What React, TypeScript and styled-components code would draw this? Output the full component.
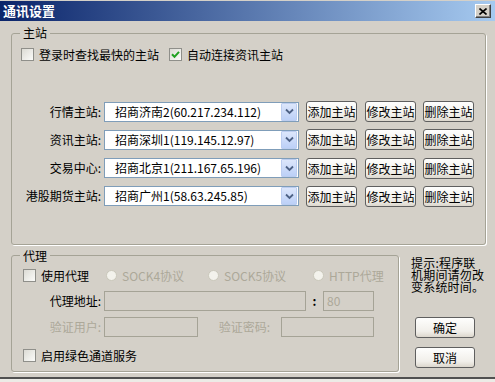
import React from "react";
import styled, { createGlobalStyle } from "styled-components";

const face = "#d4d0c8";
const grayText = "#aca899";
const font = `"Noto Sans CJK SC", "Liberation Sans", sans-serif`;

const GlobalStyle = createGlobalStyle`
  html, body {
    margin: 0;
    padding: 0;
    background: ${face};
  }
  body {
    font-family: ${font};
    font-size: 12px;
    color: #000;
  }
  * { box-sizing: border-box; }
`;

const Window = styled.div`
  width: 495px;
  height: 382px;
  display: flex;
  flex-direction: column;
  overflow: hidden;
  background: ${face};
`;

const Frame = styled.div`
  flex: 1;
  display: flex;
  flex-direction: column;
  border-bottom: 2px solid #505050;
`;

const Backdrop = styled.div`
  height: 3px;
  background: #ecebe6;
`;

const TitleBar = styled.div`
  height: 20px;
  margin-top: 1px;
  display: flex;
  align-items: center;
  justify-content: space-between;
  padding: 0 4px 0 3px;
  background: linear-gradient(90deg, #0a246a 0%, #a6caf0 100%);
`;

const Title = styled.span`
  color: #fff;
  font-weight: bold;
  font-size: 13px;
  line-height: 20px;
`;

const CloseButton = styled.button`
  width: 16px;
  height: 14px;
  padding: 0;
  display: flex;
  align-items: center;
  justify-content: center;
  background: ${face};
  border: 1px solid;
  border-color: #fff #404040 #404040 #fff;
  box-shadow: inset -1px -1px #808080;
`;

const Body = styled.div`
  flex: 1;
  display: flex;
  flex-direction: column;
  padding: 6px 9px 0 11px;
`;

const Group = styled.fieldset<{ width?: number; pb: number }>`
  margin: 0;
  padding: 0 0 ${p => p.pb}px;
  min-width: 0;
  ${p => p.width && `width: ${p.width}px;`}
  border: 1px solid #a5a396;
  border-radius: 3px;
  box-shadow: 1px 1px 0 #fff;
`;

const Legend = styled.legend`
  margin-left: 8px;
  padding: 0 3px;
  font-size: 12px;
  line-height: 12px;
`;

const CheckLine = styled.div<{ mt: number; pl: number }>`
  display: flex;
  align-items: center;
  height: 13px;
  margin-top: ${p => p.mt}px;
  padding-left: ${p => p.pl}px;
`;

const CheckItem = styled.label<{ width?: number; gray?: boolean }>`
  display: flex;
  align-items: center;
  gap: 5px;
  line-height: 13px;
  color: ${p => (p.gray ? grayText : "#000")};
  ${p => p.width && `width: ${p.width}px;`}
`;

const Box = styled.span`
  width: 13px;
  height: 13px;
  display: flex;
  align-items: center;
  justify-content: center;
  border: 1px solid #8f8f8a;
  background: linear-gradient(135deg, #dcdbd4, #fbfbf9);
`;

const Radio = styled.span`
  width: 11px;
  height: 11px;
  border-radius: 50%;
  border: 1px solid #cac8bb;
  background: #f3f2ec;
`;

const ServerList = styled.div`
  display: flex;
  flex-direction: column;
  gap: 7.33px;
  margin-top: 40px;
`;

const ServerRow = styled.div`
  display: flex;
  align-items: center;
  height: 21px;
`;

const RowLabel = styled.span<{ width: number; mr?: number; gray?: boolean }>`
  width: ${p => p.width}px;
  margin-right: ${p => p.mr ?? 3}px;
  text-align: right;
  white-space: nowrap;
  line-height: 20px;
  color: ${p => (p.gray ? grayText : "#000")};
`;

const Combo = styled.div`
  width: 195px;
  height: 20px;
  display: flex;
  align-items: center;
  justify-content: space-between;
  padding: 0 1px 0 10px;
  background: #fff;
  border: 1px solid #7f9db9;
  line-height: 18px;
  white-space: nowrap;
`;

const ComboArrow = styled.span`
  width: 16px;
  height: 18px;
  display: flex;
  align-items: center;
  justify-content: center;
  border: 1px solid #bccdf0;
  border-radius: 1px;
  background: linear-gradient(#dce6fb, #bcd0f7);
`;

const PushButton = styled.button<{ width: number; ml?: number }>`
  width: ${p => p.width}px;
  height: 21px;
  margin-left: ${p => p.ml ?? 0}px;
  padding: 0;
  font-family: ${font};
  font-size: 12px;
  line-height: 19px;
  color: #000;
  border: 1px solid #5f5f5f;
  border-radius: 3px;
  background: linear-gradient(#fefefd, #f1efea 70%, #dcd7cd);
`;

const BottomArea = styled.div`
  display: flex;
  margin-top: 5px;
`;

const ProxyRows = styled.div`
  display: flex;
  flex-direction: column;
  padding: 4px 0 0 11px;
`;

const FieldRow = styled.div<{ mt: number }>`
  display: flex;
  align-items: center;
  height: 20px;
  margin-top: ${p => p.mt}px;
`;

const Field = styled.div<{ width: number }>`
  width: ${p => p.width}px;
  height: 20px;
  padding-left: 3px;
  border: 1px solid #a5a396;
  background: ${face};
  color: ${grayText};
  line-height: 18px;
`;

const PortColon = styled.span`
  width: 17px;
  text-align: center;
  font-weight: bold;
`;

const Side = styled.div`
  display: flex;
  flex-direction: column;
  padding: 7px 0 0 12px;
`;

const Hint = styled.div`
  white-space: pre-line;
  line-height: 12px;
  letter-spacing: 0.2px;
`;

const SideButtons = styled.div`
  display: flex;
  flex-direction: column;
  gap: 9px;
  margin: 24px 0 0 4px;
`;

const servers = [
  { label: "行情主站:", value: "招商济南2(60.217.234.112)" },
  { label: "资讯主站:", value: "招商深圳1(119.145.12.97)" },
  { label: "交易中心:", value: "招商北京1(211.167.65.196)" },
  { label: "港股期货主站:", value: "招商广州1(58.63.245.85)" },
];

const Check = ({ checked }: { checked?: boolean }) => (
  <Box>
    {checked && (
      <svg width="9" height="9" viewBox="0 0 9 9">
        <path d="M1 4.2 L3.5 6.8 L8 1.8" fill="none" stroke="#21a121" strokeWidth="2" />
      </svg>
    )}
  </Box>
);

export default function App() {
  return (
    <>
      <GlobalStyle />
      <Window>
        <Frame>
          <TitleBar>
            <Title>通讯设置</Title>
            <CloseButton>
              <svg width="8" height="7" viewBox="0 0 8 7">
                <path d="M0.5 0.5 L7.5 6.5 M7.5 0.5 L0.5 6.5" stroke="#000" strokeWidth="1.6" />
              </svg>
            </CloseButton>
          </TitleBar>
          <Body>
            <Group pb={37}>
              <Legend>主站</Legend>
              <CheckLine mt={9} pl={9}>
                <CheckItem width={148}>
                  <Check />
                  登录时查找最快的主站
                </CheckItem>
                <CheckItem>
                  <Check checked />
                  自动连接资讯主站
                </CheckItem>
              </CheckLine>
              <ServerList>
                {servers.map(s => (
                  <ServerRow key={s.label}>
                    <RowLabel width={89}>{s.label}</RowLabel>
                    <Combo>
                      <span>{s.value}</span>
                      <ComboArrow>
                        <svg width="9" height="7" viewBox="0 0 9 7">
                          <path d="M1 1.5 L4.5 5 L8 1.5" fill="none" stroke="#4d6185" strokeWidth="1.8" />
                        </svg>
                      </ComboArrow>
                    </Combo>
                    <PushButton width={51} ml={7}>添加主站</PushButton>
                    <PushButton width={51} ml={8}>修改主站</PushButton>
                    <PushButton width={51} ml={7}>删除主站</PushButton>
                  </ServerRow>
                ))}
              </ServerList>
            </Group>
            <BottomArea>
              <Group width={388} pb={5}>
                <Legend>代理</Legend>
                <ProxyRows>
                  <FieldRow mt={0}>
                    <CheckItem width={83}>
                      <Check />
                      使用代理
                    </CheckItem>
                    <CheckItem width={102} gray>
                      <Radio />
                      SOCK4协议
                    </CheckItem>
                    <CheckItem width={105} gray>
                      <Radio />
                      SOCK5协议
                    </CheckItem>
                    <CheckItem gray>
                      <Radio />
                      HTTP代理
                    </CheckItem>
                  </FieldRow>
                  <FieldRow mt={5}>
                    <RowLabel width={78}>代理地址:</RowLabel>
                    <Field width={202} />
                    <PortColon>:</PortColon>
                    <Field width={51}>80</Field>
                  </FieldRow>
                  <FieldRow mt={6}>
                    <RowLabel width={78} gray>验证用户:</RowLabel>
                    <Field width={94} />
                    <RowLabel width={72} mr={11} gray>验证密码:</RowLabel>
                    <Field width={93} />
                  </FieldRow>
                  <FieldRow mt={9}>
                    <CheckItem>
                      <Check />
                      启用绿色通道服务
                    </CheckItem>
                  </FieldRow>
                </ProxyRows>
              </Group>
              <Side>
                <Hint>{"提示:程序联\n机期间请勿改\n变系统时间。"}</Hint>
                <SideButtons>
                  <PushButton width={60}>确定</PushButton>
                  <PushButton width={60}>取消</PushButton>
                </SideButtons>
              </Side>
            </BottomArea>
          </Body>
        </Frame>
        <Backdrop />
      </Window>
    </>
  );
}
